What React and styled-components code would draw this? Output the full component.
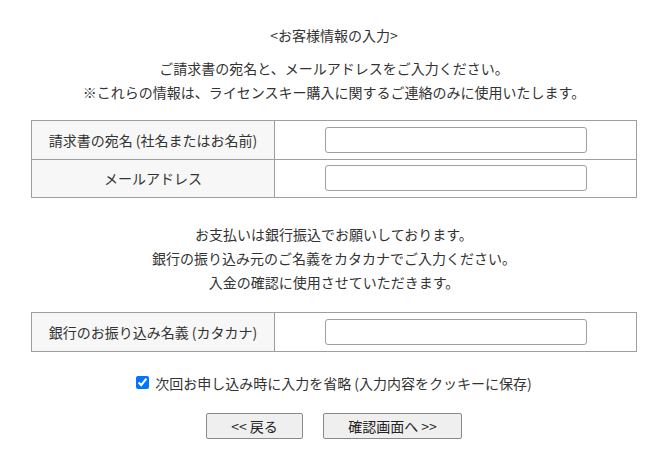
import React from 'react';
import styled, { createGlobalStyle } from 'styled-components';

const GlobalStyle = createGlobalStyle`
  body {
    margin: 0;
    background: #fff;
    font-family: "Noto Sans CJK JP", "Noto Sans", sans-serif;
    color: #333;
  }
`;

const Page = styled.div`
  width: 606px;
  margin-left: 31px;
  padding-top: 23px;
  font-size: 14px;
  line-height: 24px;
  text-align: center;
`;

const Title = styled.div`
  margin-bottom: 9px;
`;

const Note = styled.p`
  margin: ${(p) => p.$margin || '0'};
`;

const FormTable = styled.table`
  width: 100%;
  border-collapse: collapse;
  margin: ${(p) => p.$margin || '0'};
`;

const Label = styled.th`
  width: 242px;
  height: 37.5px;
  padding: 0;
  border: 1px solid #9e9e9e;
  background: #f7f7f7;
  font-weight: normal;
  text-align: center;
`;

const Field = styled.td`
  padding: 0;
  border: 1px solid #9e9e9e;
  text-align: center;
  vertical-align: middle;
`;

const TextInput = styled.input`
  box-sizing: border-box;
  display: block;
  margin: 0 auto;
  width: 262px;
  height: 26px;
  border: 1px solid #a0a0a0;
  border-radius: 3px;
  background: #fff;
  font-family: inherit;
  font-size: 14px;
  padding: 0 6px;
`;

const CheckRow = styled.label`
  display: flex;
  align-items: center;
  justify-content: center;
  gap: 6px;
  margin-top: 19px;
  height: 24px;
`;

const Check = styled.input`
  width: 13px;
  height: 13px;
  margin: 0;
  accent-color: #0075ff;
`;

const Buttons = styled.div`
  display: flex;
  justify-content: center;
  gap: 20px;
  margin-top: 18px;
`;

const Button = styled.button`
  box-sizing: border-box;
  width: ${(p) => p.$width}px;
  height: 26px;
  border: 1px solid #8a8a8a;
  border-radius: 2px;
  background: #efefef;
  color: #222;
  font-family: inherit;
  font-size: 14px;
  line-height: 1;
  padding: 0;
`;

export default function App() {
  return (
    <>
      <GlobalStyle />
      <Page>
        <Title>&lt;お客様情報の入力&gt;</Title>
        <Note>ご請求書の宛名と、メールアドレスをご入力ください。</Note>
        <Note>※これらの情報は、ライセンスキー購入に関するご連絡のみに使用いたします。</Note>

        <FormTable $margin="16px 0 0">
          <tbody>
            <tr>
              <Label>請求書の宛名 (社名またはお名前)</Label>
              <Field><TextInput type="text" /></Field>
            </tr>
            <tr>
              <Label>メールアドレス</Label>
              <Field><TextInput type="email" /></Field>
            </tr>
          </tbody>
        </FormTable>

        <Note $margin="24px 0 0">お支払いは銀行振込でお願いしております。</Note>
        <Note>銀行の振り込み元のご名義をカタカナでご入力ください。</Note>
        <Note>入金の確認に使用させていただきます。</Note>

        <FormTable $margin="18px 0 0">
          <tbody>
            <tr>
              <Label>銀行のお振り込み名義 (カタカナ)</Label>
              <Field><TextInput type="text" /></Field>
            </tr>
          </tbody>
        </FormTable>

        <CheckRow>
          <Check type="checkbox" defaultChecked />
          次回お申し込み時に入力を省略 (入力内容をクッキーに保存)
        </CheckRow>

        <Buttons>
          <Button $width={97}>&lt;&lt; 戻る</Button>
          <Button $width={139}>確認画面へ &gt;&gt;</Button>
        </Buttons>
      </Page>
    </>
  );
}
